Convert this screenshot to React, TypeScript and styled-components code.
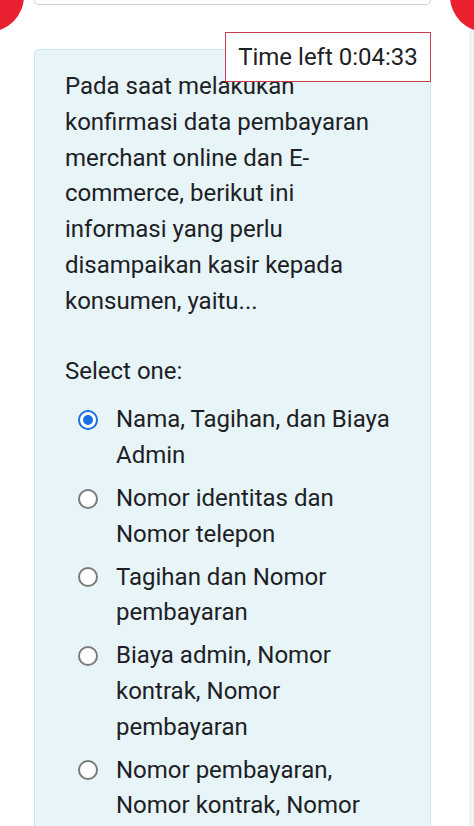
import { createGlobalStyle, styled } from "styled-components";

const GlobalStyle = createGlobalStyle`
  html, body {
    margin: 0;
    padding: 0;
    background: #ffffff;
  }
  body {
    font-family: Roboto, "Noto Sans", "Liberation Sans", sans-serif;
    color: #1d2125;
  }
`;

const Page = styled.div`
  position: relative;
  width: 474px;
  height: 826px;
  overflow: hidden;
  display: flex;
  background: #ffffff;
`;

const Main = styled.main`
  flex: 1;
  padding-left: 34px;
  padding-right: 38px;
`;

const Gutter = styled.div`
  width: 5px;
  background: #f0f2f5;
`;

const Blob = styled.div<{ $side: "left" | "right" }>`
  position: absolute;
  top: -40px;
  ${(p) => (p.$side === "left" ? "left: -48px;" : "right: -48px;")}
  width: 72px;
  height: 72px;
  border-radius: 50%;
  background: #e8202f;
`;

const PrevCard = styled.div`
  height: 4px;
  border: 1px solid #cfd3d7;
  border-top: none;
  border-radius: 0 0 5px 5px;
`;

const Timer = styled.div`
  position: absolute;
  top: 32px;
  right: 43px;
  width: 206px;
  height: 50px;
  box-sizing: border-box;
  border: 1px solid #c8404f;
  background: #ffffff;
  display: flex;
  align-items: center;
  justify-content: center;
  font-size: 24px;
  z-index: 2;
`;

const QuestionBox = styled.section`
  margin-top: 44px;
  border: 1px solid #cde5ee;
  border-radius: 5px;
  background: #e7f4f8;
  padding: 19px 30px 40px 30px;
  font-size: 24px;
  line-height: 35.8px;
`;

const QuestionText = styled.p`
  margin: 0 0 34px 0;
`;

const Prompt = styled.div`
  margin-bottom: 13px;
`;

const Options = styled.div`
  display: flex;
  flex-direction: column;
  gap: 7px;
`;

const Option = styled.label`
  display: flex;
  align-items: flex-start;
`;

const RadioWrap = styled.span`
  width: 51px;
  height: 35.8px;
  display: flex;
  align-items: center;
  padding-left: 13px;
  box-sizing: border-box;
  flex-shrink: 0;
`;

const Radio = styled.span<{ $checked?: boolean }>`
  width: 20px;
  height: 20px;
  box-sizing: border-box;
  border-radius: 50%;
  border: 2px solid ${(p) => (p.$checked ? "#1a6fe0" : "#7a7a7a")};
  background: #ffffff;
  display: flex;
  align-items: center;
  justify-content: center;
  &::after {
    content: "";
    width: 10px;
    height: 10px;
    border-radius: 50%;
    background: ${(p) => (p.$checked ? "#1a6fe0" : "transparent")};
  }
`;

const OptionText = styled.span`
  flex: 1;
`;

const answers = [
  "Nama, Tagihan, dan Biaya Admin",
  "Nomor identitas dan Nomor telepon",
  "Tagihan dan Nomor pembayaran",
  "Biaya admin, Nomor kontrak, Nomor pembayaran",
  "Nomor pembayaran, Nomor kontrak, Nomor identitas",
];

export default function App() {
  return (
    <>
      <GlobalStyle />
      <Page>
        <Blob $side="left" />
        <Blob $side="right" />
        <Main>
          <PrevCard />
          <QuestionBox>
            <QuestionText>
              Pada saat melakukan konfirmasi data pembayaran merchant online dan E-commerce, berikut
              ini informasi yang perlu disampaikan kasir kepada konsumen, yaitu...
            </QuestionText>
            <Prompt>Select one:</Prompt>
            <Options>
              {answers.map((a, i) => (
                <Option key={a}>
                  <RadioWrap>
                    <Radio $checked={i === 0} />
                  </RadioWrap>
                  <OptionText>{a}</OptionText>
                </Option>
              ))}
            </Options>
          </QuestionBox>
        </Main>
        <Gutter />
        <Timer>Time left 0:04:33</Timer>
      </Page>
    </>
  );
}
